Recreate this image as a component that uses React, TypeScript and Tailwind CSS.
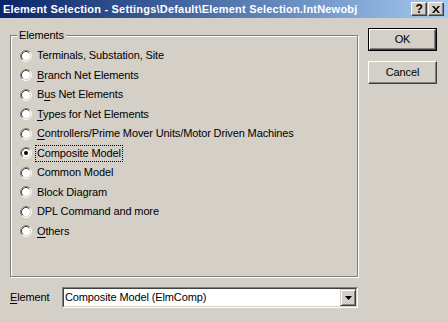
import React from "react";

const items = [
  { label: "Terminals, Substation, Site" },
  { label: "Branch Net Elements", u: 0 },
  { label: "Bus Net Elements", u: 1 },
  { label: "Types for Net Elements", u: 0 },
  { label: "Controllers/Prime Mover Units/Motor Driven Machines", u: 0 },
  { label: "Composite Model", checked: true },
  { label: "Common Model" },
  { label: "Block Diagram" },
  { label: "DPL Command and more" },
  { label: "Others", u: 0 },
];

const Radio = ({ checked }: { checked?: boolean }) => (
  <svg width="12" height="12" viewBox="0 0 12 12" className="shrink-0">
    <circle cx="6" cy="6" r="5" fill="#fff" />
    <path d="M2.11 9.89 A5.5 5.5 0 0 1 9.89 2.11" stroke="#808080" fill="none" />
    <path d="M9.89 2.11 A5.5 5.5 0 0 1 2.11 9.89" stroke="#fff" fill="none" />
    <path d="M2.82 9.18 A4.5 4.5 0 0 1 9.18 2.82" stroke="#404040" fill="none" />
    <path d="M9.18 2.82 A4.5 4.5 0 0 1 2.82 9.18" stroke="#d4d0c8" fill="none" />
    {checked && <circle cx="6" cy="6" r="2" fill="#000" />}
  </svg>
);

const Label = ({ text, u }: { text: string; u?: number }) => {
  if (u === undefined) return <>{text}</>;
  return (
    <>
      {text.slice(0, u)}
      <span className="underline underline-offset-2">{text[u]}</span>
      {text.slice(u + 1)}
    </>
  );
};

const App = () => {
  return (
    <div className="w-[448px] h-[322px] overflow-hidden bg-[#d4d0c8] font-['Liberation_Sans',sans-serif] text-[11px] text-black leading-none tracking-[-0.12px]">
      <div className="h-[18px] flex items-center pl-[3px] pr-[4px] bg-linear-to-r from-[#0a246a] to-[#a6caf0]">
        <span className="flex-1 font-bold text-white whitespace-nowrap tracking-[0.2px]">
          {"Element Selection - Settings\\Default\\Element Selection.IntNewobj"}
        </span>
        <div className="flex gap-[1px]">
          <div className="w-[16px] h-[14px] flex items-center justify-center bg-[#d4d0c8] border border-t-white border-l-white border-b-[#404040] border-r-[#404040] shadow-[inset_-1px_-1px_0_#808080] font-bold text-[12px]">
            ?
          </div>
          <div className="w-[16px] h-[14px] flex items-center justify-center bg-[#d4d0c8] border border-t-white border-l-white border-b-[#404040] border-r-[#404040] shadow-[inset_-1px_-1px_0_#808080]">
            <svg width="8" height="7" viewBox="0 0 8 7">
              <path d="M0 0h2l2 2.5L6 0h2L5 3.5 8 7H6L4 4.5 2 7H0l3-3.5z" fill="#000" />
            </svg>
          </div>
        </div>
      </div>

      <div className="flex pl-[10px] pt-[10px]">
        <div className="w-[348px] pt-[7px]">
          <div className="relative h-[242px] border border-[#808080] shadow-[inset_1px_1px_0_#fff,1px_1px_0_#fff] pt-[10px] pl-[9px]">
            <span className="absolute left-[6px] top-[-6px] px-[2px] bg-[#d4d0c8]">Elements</span>
            <div className="flex flex-col">
              {items.map((it) => (
                <div key={it.label} className="h-[19.5px] flex items-center gap-[5px]">
                  <Radio checked={it.checked} />
                  <span
                    className={
                      it.checked
                        ? "outline outline-1 outline-dotted outline-black px-[1px] py-[2px] -ml-[1px]"
                        : ""
                    }
                  >
                    <Label text={it.label} u={it.u} />
                  </span>
                </div>
              ))}
            </div>
          </div>

          <div className="flex items-center mt-[10px]">
            <span className="w-[52px]">
              <Label text="Element" u={0} />
            </span>
            <div className="w-[296px] h-[21px] border border-t-[#808080] border-l-[#808080] border-b-white border-r-white">
              <div className="h-full flex border border-t-[#404040] border-l-[#404040] border-b-[#d4d0c8] border-r-[#d4d0c8] bg-white">
                <span className="flex-1 flex items-center pl-[1px]">Composite Model (ElmComp)</span>
                <div className="w-[16px] h-full flex items-center justify-center bg-[#d4d0c8] border border-t-[#d4d0c8] border-l-[#d4d0c8] border-b-[#404040] border-r-[#404040] shadow-[inset_1px_1px_0_#fff,inset_-1px_-1px_0_#808080]">
                  <svg width="7" height="4" viewBox="0 0 7 4">
                    <path d="M0 0h7L3.5 4z" fill="#000" />
                  </svg>
                </div>
              </div>
            </div>
          </div>
        </div>

        <div className="ml-[10px] flex flex-col gap-[10px]">
          <div className="w-[69px] h-[23px] border border-black">
            <div className="h-full flex items-center justify-center border border-t-white border-l-white border-b-[#404040] border-r-[#404040] shadow-[inset_-1px_-1px_0_#808080]">
              OK
            </div>
          </div>
          <div className="w-[69px] h-[23px] flex items-center justify-center border border-t-white border-l-white border-b-[#404040] border-r-[#404040] shadow-[inset_-1px_-1px_0_#808080]">
            Cancel
          </div>
        </div>
      </div>
    </div>
  );
};

export default App;
